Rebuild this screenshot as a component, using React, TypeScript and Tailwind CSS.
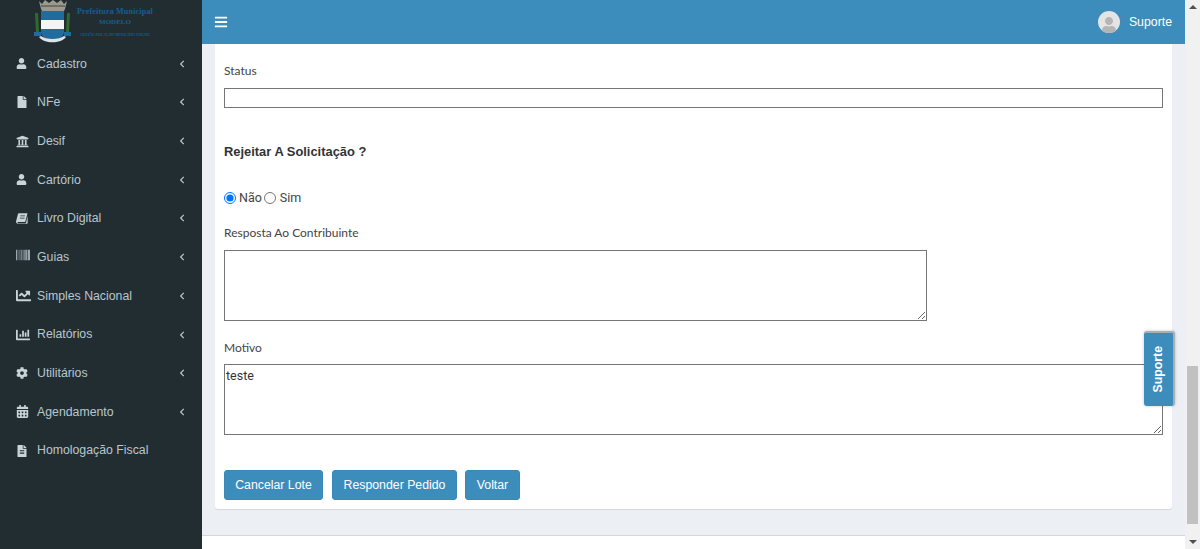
import { FaBars, FaBarcode, FaCalendarAlt, FaChartBar, FaChartLine, FaChevronLeft, FaCog, FaFile, FaFileAlt, FaUniversity, FaUser } from "react-icons/fa";
import type { IconType } from "react-icons";

// fa4 style book, tilted like the reference
function TiltedBook({ className }: { className?: string }) {
  return (
    <svg viewBox="0 0 14 12" width="12" height="11" className={className} fill="currentColor">
      <path d="M3.4 0H13.4L11 9.2c-.2.7-.7 1-1.4 1H2.4c-.5 0-.8.5-.6.9.1.3.4.4.7.4h8.6l.5-.3L13.6 3v8.2c0 .5-.3.8-.8.8H2.2C.8 12-.3 10.700.1 9.300L2.200.9C2.300.4 2.800 0 3.400 0zM5 2.500v1h5.500v-1zM4.500 5v1H10V5z" fillRule="evenodd" />
    </svg>
  );
}

const menu: { label: string; icon: IconType | typeof TiltedBook; size: string; arrow?: boolean }[] = [
  { label: "Cadastro", icon: FaUser, size: "text-[11px]", arrow: true },
  { label: "NFe", icon: FaFile, size: "text-[12px]", arrow: true },
  { label: "Desif", icon: FaUniversity, size: "text-[13px]", arrow: true },
  { label: "Cartório", icon: FaUser, size: "text-[11px]", arrow: true },
  { label: "Livro Digital", icon: TiltedBook, size: "", arrow: true },
  { label: "Guias", icon: FaBarcode, size: "text-[14px] -translate-y-[2px]", arrow: true },
  { label: "Simples Nacional", icon: FaChartLine, size: "text-[15px]", arrow: true },
  { label: "Relatórios", icon: FaChartBar, size: "text-[14px]", arrow: true },
  { label: "Utilitários", icon: FaCog, size: "text-[12px]", arrow: true },
  { label: "Agendamento", icon: FaCalendarAlt, size: "text-[13px]", arrow: true },
  { label: "Homologação Fiscal", icon: FaFileAlt, size: "text-[12px]" },
];

function Crest() {
  return (
    <svg width="38" height="44" viewBox="0 0 38 44" className="shrink-0">
      <path d="M5 1l3 3 3-4 4 3 4-3 4 3 4-3 3 4 3-3-2 8-1 2H8L7 9z" fill="#9a9a90" />
      <path d="M7 5h24v2H7z" fill="#6f6f68" />
      <path d="M7 11h23v21c0 5-6 8-11.500 8S7 37 7 32z" fill="#1f6d9f" />
      <rect x="7" y="20" width="23" height="9" fill="#f2f4f6" />
      <path d="M1 13h3l1 19H2zM33 13h3l-1 19h-3z" fill="#2f6b2f" />
      <path d="M0 32h7v4H0zM30 32h7v4h-7z" fill="#1f6d9f" />
      <path d="M5 37c5 7 22 7 27 0l-2-1c-5 4-18 4-23 0z" fill="#dfe3e5" />
    </svg>
  );
}

function Sidebar() {
  return (
    <aside className="w-[202px] shrink-0 bg-[#222d32] font-['Liberation_Sans',sans-serif]">
      <div className="h-[44px] flex items-start pl-[34px] overflow-hidden">
        <Crest />
        <div className="ml-[4px] w-[78px] flex flex-col items-center text-[#155f91] font-['Liberation_Serif',serif] font-bold">
          <span className="text-[8px] tracking-[0.2px] leading-[8px] mt-[8px] whitespace-nowrap">Prefeitura Municipal</span>
          <span className="text-[7px] leading-[8px] mt-[2px]">MODELO</span>
          <span className="text-[3.500px] leading-[4px] mt-[7px] whitespace-nowrap">GESTÃO FISCAL DO MUNICÍPIO ONLINE</span>
        </div>
      </div>
      <nav className="pt-[0.400px] text-[#b8c7ce] text-[12.300px]">
        {menu.map((item) => (
          <div key={item.label} className="h-[38.700px] flex items-center pl-[16px] pr-[16px]">
            <span className="w-[21px] shrink-0 flex"><item.icon className={`${item.size} text-[#c8d4da]`} /></span>
            <span className="flex-1 whitespace-nowrap">{item.label}</span>
            {item.arrow && <FaChevronLeft className="text-[8px] text-[#b8c7ce]" />}
          </div>
        ))}
      </nav>
    </aside>
  );
}

function Field({ label, children }: { label: string; children: React.ReactNode }) {
  return (
    <div>
      <label className="block font-['Lato',sans-serif] text-[12px] leading-[16px] text-[#444]">{label}</label>
      {children}
    </div>
  );
}

export default function App() {
  return (
    <div className="relative h-[549px] flex overflow-hidden bg-white font-['Open_Sans',sans-serif]">
      <Sidebar />
      <div className="flex-1 min-w-0 flex flex-col">
        <header className="h-[44px] shrink-0 bg-[#3c8dbc] flex items-center justify-between pl-[12px] pr-[13px] text-white font-['Liberation_Sans',sans-serif]">
          <FaBars className="text-[14px]" />
          <div className="flex items-center gap-[9px]">
            <div className="w-[22px] h-[22px] rounded-full bg-[#e4e4e4] overflow-hidden flex items-end justify-center">
              <FaUser className="text-[16px] text-[#b5b5b5]" />
            </div>
            <span className="text-[12.300px]">Suporte</span>
          </div>
        </header>
        <main className="flex-1 min-h-0 bg-[#ecf0f5] px-[13px] flex flex-col">
          <section className="h-[465px] shrink-0 bg-white rounded-b-[3px] shadow-[0_1px_1px_rgba(0,0,0,0.1)] px-[9px] pt-[19px]">
            <Field label="Status">
              <input className="mt-[9px] block w-full h-[20px] border border-[#767676] outline-none" />
            </Field>
            <h3 className="mt-[35px] text-[12.900px] leading-[18px] font-bold text-[#333] font-['Liberation_Sans',sans-serif]">Rejeitar A Solicitação ?</h3>
            <div className="mt-[28px] flex items-center text-[12.500px] leading-[18px] text-[#444] font-['Roboto',sans-serif]">
              <input type="radio" name="rejeitar" defaultChecked className="m-0 w-[12px] h-[12px]" />
              <span className="ml-[3px]">Não</span>
              <input type="radio" name="rejeitar" className="ml-[2px] w-[12px] h-[12px]" />
              <span className="ml-[4px]">Sim</span>
            </div>
            <div className="mt-[18px]">
              <Field label="Resposta Ao Contribuinte">
                <textarea className="mt-[9px] block w-[703px] h-[71px] border border-[#767676] outline-none text-[13px] px-[2px]" />
              </Field>
            </div>
            <div className="mt-[19px]">
              <Field label="Motivo">
                <textarea defaultValue="teste" className="mt-[8px] block w-full h-[71px] border border-[#767676] outline-none text-[12.500px] leading-[17px] px-[1px] py-[2px] font-['Roboto',sans-serif] text-[#333]" />
              </Field>
            </div>
            <div className="mt-[35px] flex font-['Liberation_Sans',sans-serif]">
              <button className="h-[30px] w-[99px] rounded-[3px] bg-[#3c8dbc] border border-[#3a88b6] text-white text-[12.300px]">Cancelar Lote</button>
              <button className="ml-[9px] h-[30px] w-[125px] rounded-[3px] bg-[#3c8dbc] border border-[#3a88b6] text-white text-[12.300px]">Responder Pedido</button>
              <button className="ml-[8px] h-[30px] w-[55px] rounded-[3px] bg-[#3c8dbc] border border-[#3a88b6] text-white text-[12.300px]">Voltar</button>
            </div>
          </section>
        </main>
        <footer className="h-[14px] shrink-0 bg-white border-t border-[#d2d6de]" />
      </div>
      <div className="w-[15px] shrink-0 bg-[#f1f1f1] flex flex-col items-center justify-between py-[5px] relative">
        <div className="w-0 h-0 border-x-[4px] border-x-transparent border-b-[4px] border-b-[#505050]" />
        <div className="absolute left-0 right-0 top-[366px] h-[158px] mx-[2px] bg-[#c1c1c1]" />
        <div className="w-0 h-0 border-x-[4px] border-x-transparent border-t-[4px] border-t-[#505050]" />
      </div>
      <button className="absolute left-[1144px] top-[331px] w-[31px] h-[75px] rounded-[3px] bg-[#3c8dbc] border-t-2 border-r-2 border-[#a9aeb2] shadow-[0_0_3px_rgba(0,0,0,0.25)] flex items-center justify-center">
        <span className="[writing-mode:vertical-rl] rotate-180 text-white text-[12.300px] font-bold font-['Liberation_Sans',sans-serif]">Suporte</span>
      </button>
    </div>
  );
}
